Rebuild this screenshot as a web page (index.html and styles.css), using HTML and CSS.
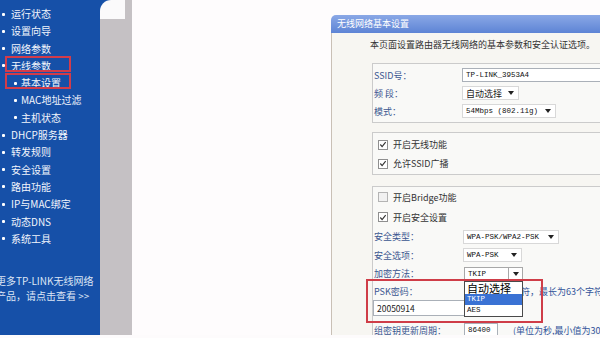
FILE: index.html
```html
<!DOCTYPE html>
<html lang="zh-CN">
<head>
    <meta charset="UTF-8">
    <meta name="viewport" content="width=device-width, initial-scale=1.0">
    <title>无线网络基本设置</title>
    <link rel="stylesheet" href="styles.css">
</head>
<body>
    <div class="page">
        <!-- 左侧菜单 -->
        <nav class="menu">
            <ul class="menu-list">
                <li class="menu-item">运行状态</li>
                <li class="menu-item">设置向导</li>
                <li class="menu-item">网络参数</li>
                <li class="menu-item marked">无线参数</li>
                <li class="menu-item sub marked">基本设置</li>
                <li class="menu-item sub">MAC地址过滤</li>
                <li class="menu-item sub">主机状态</li>
                <li class="menu-item">DHCP服务器</li>
                <li class="menu-item">转发规则</li>
                <li class="menu-item">安全设置</li>
                <li class="menu-item">路由功能</li>
                <li class="menu-item">IP与MAC绑定</li>
                <li class="menu-item">动态DNS</li>
                <li class="menu-item">系统工具</li>
            </ul>
            <p class="menu-promo">更多TP-LINK无线网络<br>产品，请点击查看 &gt;&gt;</p>
        </nav>

        <div class="gutter"><div class="gutter-cap"><span></span></div></div>

        <!-- 设置面板 -->
        <main class="content">
            <section class="panel">
                <div class="panel-title">无线网络基本设置</div>
                <div class="panel-body">
                    <p class="intro">本页面设置路由器无线网络的基本参数和安全认证选项。</p>

                    <div class="group">
                        <div class="row"><span class="label">SSID号：</span><span class="input input-ssid mono">TP-LINK_3953A4</span></div>
                        <div class="row"><span class="label">频 段：</span><span class="select select-band">自动选择<i class="arrow"></i></span></div>
                        <div class="row"><span class="label">模式：</span><span class="select select-mode mono">54Mbps (802.11g)<i class="arrow"></i></span></div>
                    </div>

                    <div class="group group-checks">
                        <div class="row check-row"><span class="check"><svg viewBox="0 0 9 9" width="9" height="9"><polyline points="1.5,4.5 3.5,6.8 7.5,1.8" fill="none" stroke="#333" stroke-width="1.3"/></svg></span>开启无线功能</div>
                        <div class="row check-row"><span class="check"><svg viewBox="0 0 9 9" width="9" height="9"><polyline points="1.5,4.5 3.5,6.8 7.5,1.8" fill="none" stroke="#333" stroke-width="1.3"/></svg></span>允许SSID广播</div>
                    </div>

                    <div class="group group-security">
                        <div class="row check-row tall"><span class="check off"></span>开启Bridge功能</div>
                        <div class="row check-row tall"><span class="check"><svg viewBox="0 0 9 9" width="9" height="9"><polyline points="1.5,4.5 3.5,6.8 7.5,1.8" fill="none" stroke="#333" stroke-width="1.3"/></svg></span>开启安全设置</div>
                        <div class="row row-19"><span class="label">安全类型：</span><span class="select select-type mono">WPA-PSK/WPA2-PSK<i class="arrow"></i></span></div>
                        <div class="row"><span class="label">安全选项：</span><span class="select select-option mono">WPA-PSK<i class="arrow"></i></span></div>
                        <div class="row row-19">
                            <span class="label">加密方法：</span>
                            <span class="select select-cipher mono">TKIP<i class="arrow-box"><i class="arrow"></i></i>
                                <ul class="dropdown">
                                    <li class="opt opt-cn">自动选择</li>
                                    <li class="opt active">TKIP</li>
                                    <li class="opt">AES</li>
                                </ul>
                            </span>
                        </div>
                        <div class="row row-psk"><span class="label">PSK密码：</span><span class="hint hint-psk">最短为8个字符，最长为63个字符</span></div>
                        <div class="row row-pass"><span class="input input-pass">20050914</span></div>
                        <div class="row row-period"><span class="label">组密钥更新周期：</span><span class="input input-period mono">86400</span><span class="hint">(单位为秒,最小值为30,不更新则为0)</span></div>
                        <div class="annotation"></div>
                    </div>
                </div>
            </section>
        </main>
    </div>
</body>
</html>
```

FILE: styles.css
```css
body {
    margin: 0;
    background-color: #fdfbfc;
    font-family: "Noto Sans CJK SC", "Noto Sans", sans-serif;
}

.page {
    display: flex;
    height: 335px;
    overflow: hidden;
}

/* 左侧菜单 */
.menu {
    width: 100px;
    flex: none;
    background-color: #1650a8;
    color: #f2f5fc;
    font-size: 10px;
    overflow: hidden;
}

.menu-list {
    list-style: none;
    margin: 0;
    padding: 5px 0 0;
}

.menu-item {
    position: relative;
    height: 17.3px;
    line-height: 17.3px;
    padding-left: 11px;
    white-space: nowrap;
}

.menu-item::before {
    content: '';
    position: absolute;
    left: 2px;
    top: 7.5px;
    width: 3px;
    height: 3px;
    background-color: #fff;
    border-radius: 1px;
}

.menu-item.sub {
    padding-left: 21px;
}

.menu-item.sub::before {
    left: 14px;
}

.menu-item.marked::after {
    content: '';
    position: absolute;
    left: 5px;
    top: -1px;
    width: 66px;
    height: 16px;
    border: 2px solid #d23c4a;
    box-sizing: border-box;
}

.menu-promo {
    margin: 27px 0 0 -4px;
    line-height: 14.5px;
    color: #dde5f5;
    white-space: nowrap;
}

/* 灰色分隔栏 */
.gutter {
    width: 32px;
    flex: none;
    background-color: #c5c1c4;
}

.gutter-cap {
    width: 25px;
    height: 19px;
    background-color: #1650a8;
}

.gutter-cap span {
    display: block;
    height: 100%;
    background-color: #fbfafb;
    border-top-left-radius: 11px;
}

/* 主体 */
.content {
    flex: 1;
    min-width: 0;
    overflow: hidden;
    background-color: #fefcfd;
    padding: 15px 0 0 199px;
}

.panel {
    width: 340px;
    height: 320px;
    display: flex;
    flex-direction: column;
}

.panel-title {
    height: 18px;
    line-height: 18px;
    padding-left: 6px;
    font-size: 9px;
    color: #fff;
    background: linear-gradient(#8aa8e6, #5d84d5);
    border-top-left-radius: 5px;
}

.panel-body {
    flex: 1;
    background-color: #f7f6f2;
    border-left: 1px solid #c9c0b6;
    padding: 6px 0 0 40px;
}

.intro {
    margin: 0 0 12px -2px;
    font-size: 9px;
    line-height: 12px;
    color: #333;
    white-space: nowrap;
}

.group {
    position: relative;
    width: 300px;
    border: 1px solid #cbcbcb;
    background-color: #f9f9f7;
    padding: 2px 0;
    margin-bottom: 9px;
}

.group-checks {
    padding: 2px 0 1px;
    margin-bottom: 11px;
}

.group-security {
    padding: 0;
}

.row {
    display: flex;
    align-items: center;
    height: 18px;
    font-size: 9px;
    white-space: nowrap;
}

.row-19 {
    height: 19px;
}

.label {
    width: 89px;
    flex: none;
    padding-left: 1px;
    color: #3a5690;
}

.mono {
    font-family: "Liberation Mono", monospace;
    font-size: 7.5px;
    color: #111;
}

.input {
    box-sizing: border-box;
    height: 14px;
    line-height: 12px;
    border: 1px solid #aab0b8;
    background-color: #fff;
    padding-left: 3px;
}

.input-ssid {
    width: 200px;
    margin-left: -1px;
}

.select {
    position: relative;
    box-sizing: border-box;
    display: inline-flex;
    align-items: center;
    height: 14px;
    border: 1px solid #d8d8d8;
    background-color: #fff;
    padding: 0 4px 0 3px;
}

.arrow {
    margin-left: auto;
    width: 0;
    height: 0;
    border-left: 3px solid transparent;
    border-right: 3px solid transparent;
    border-top: 4px solid #222;
}

.select-band {
    width: 57px;
    margin-left: -1px;
    color: #222;
}

.select-mode {
    width: 94px;
    margin-left: -1px;
}

.select-type {
    width: 96px;
}

.select-option {
    width: 59px;
}

.select-cipher {
    width: 59px;
    margin-left: 1px;
    padding-right: 0;
    border-color: #a8a8a8;
}

.arrow-box {
    margin-left: auto;
    width: 13px;
    height: 12px;
    display: flex;
    align-items: center;
    justify-content: center;
    border-left: 1px solid #a8a8a8;
}

.arrow-box .arrow {
    margin-left: 0;
}

/* 展开的下拉列表 */
.dropdown {
    position: absolute;
    top: 13px;
    left: -1px;
    width: 59px;
    box-sizing: border-box;
    list-style: none;
    margin: 0;
    padding: 0;
    border: 1px solid #4a4a4a;
    background-color: #fff;
    z-index: 1;
}

.opt {
    height: 11px;
    line-height: 11px;
    padding-left: 2px;
}

.opt-cn {
    height: 12px;
    line-height: 12px;
    font-family: "Noto Sans CJK SC", sans-serif;
    font-size: 11px;
    color: #000;
}

.opt.active {
    background-color: #3a72d4;
    color: #fff;
}

/* 复选框 */
.check-row {
    height: 19px;
    padding-left: 5px;
    color: #333;
}

.check-row.tall {
    height: 20px;
}

.check {
    box-sizing: border-box;
    width: 10px;
    height: 10px;
    margin-right: 5px;
    border: 1px solid #8f8f8f;
    background-color: #fff;
    display: flex;
    align-items: center;
    justify-content: center;
}

.check svg {
    display: block;
}

.check.off {
    border-color: #b4b4b4;
    background-color: #f1f1f1;
}

.hint {
    color: #33549a;
}

.row-psk {
    height: 17px;
}

.hint-psk {
    margin-left: 8px;
}

.row-pass {
    height: 17px;
    align-items: flex-start;
}

.input-pass {
    width: 150px;
    height: 16px;
    line-height: 14px;
    font-size: 8.5px;
    color: #222;
}

.row-period {
    height: 20px;
    margin-top: 3px;
}

.input-period {
    width: 34px;
    margin-left: 1px;
    margin-right: 15px;
}

/* 红色标注框 */
.annotation {
    position: absolute;
    left: -7px;
    top: 92px;
    width: 177px;
    height: 44px;
    box-sizing: border-box;
    border: 2px solid #cf3d48;
    z-index: 2;
}
```
